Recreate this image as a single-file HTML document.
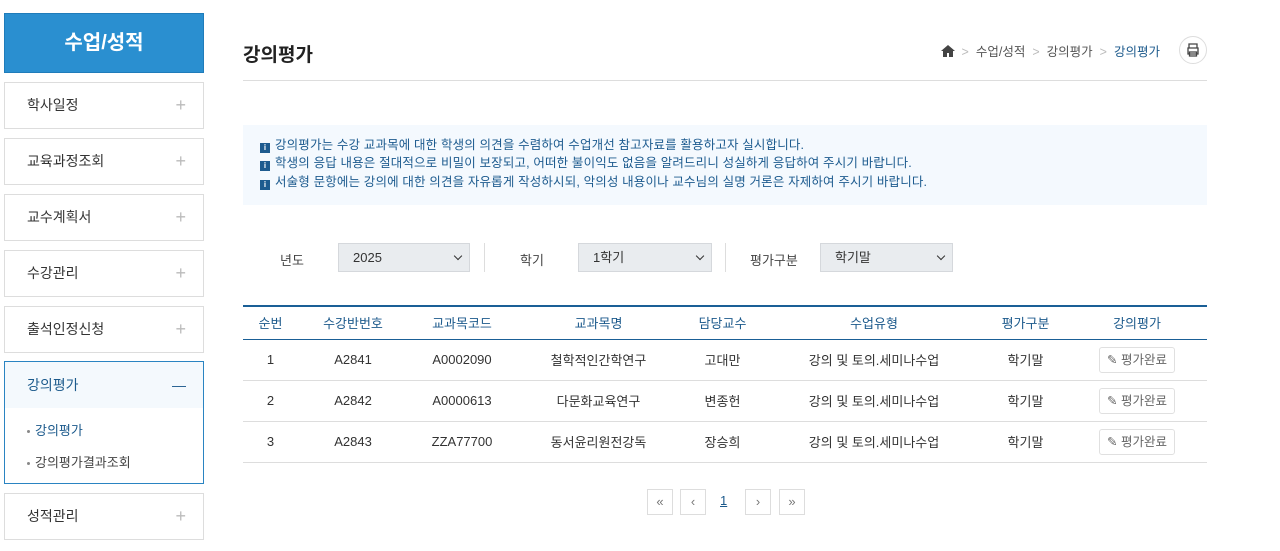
<!DOCTYPE html>
<html><head><meta charset="utf-8"><style>
*{box-sizing:border-box;margin:0;padding:0}
body{width:1280px;height:551px;background:#fff;font-family:"Liberation Sans","Noto Sans CJK KR",sans-serif;color:#333;position:relative;overflow:hidden;font-size:13px}
.abs{position:absolute}
.side-title{left:4px;top:13px;width:200px;height:60px;background:#2a8fd0;border:1px solid #1f7cba;color:#fff;font-size:20px;font-weight:bold;text-align:center;line-height:58px}
.mi{left:4px;width:200px;height:47px;border:1px solid #ddd;font-size:14px;line-height:45px;padding-left:22px;color:#333}
.mi .pl{position:absolute;right:17px;top:0;color:#bbb;font-size:18px;font-weight:300}
.act{left:4px;top:361px;width:200px;height:123px;border:1px solid #2a84c2}
.act .hd{height:46px;background:#f4f9fd;line-height:46px;padding-left:22px;font-size:14px;color:#1c5a8c;position:relative}
.act .hd span{position:absolute;right:17px;top:0;color:#1c5a8c;font-weight:300}
.sub{font-size:13px;padding-left:22px;height:32px;line-height:32px;color:#444}
.sub b{display:inline-block;width:3px;height:3px;background:#888;border-radius:50%;vertical-align:middle;margin-right:5px}
h1{left:243px;top:40px;font-size:19px;font-weight:bold;color:#222}
.bc{right:120px;top:41px;font-size:12.5px;color:#555}
.bc i{color:#bbb;font-style:normal;margin:0 7px}
.pr{left:1179px;top:36px;width:28px;height:28px;border:1px solid #ddd;border-radius:50%}
.hr{left:243px;top:80px;width:964px;height:1px;background:#ddd}
.info{left:243px;top:125px;width:964px;height:80px;background:#f4f9fe;padding:11px 0 0 17px;font-size:12.5px;color:#1d5b8f;line-height:18.3px;letter-spacing:0.15px}
.info b{display:inline-block;width:10px;height:10px;background:#1d5b8f;vertical-align:-1px;margin-right:5px;color:#fff;font-size:8px;line-height:10px;text-align:center}
.lab{top:250px;font-size:13px;color:#444}
.sel{top:243px;height:29px;background:#e9ecef;border:1px solid #d5d8dc;font-size:13px;line-height:27px;padding-left:14px;color:#333}
.sel:after{content:"";position:absolute;right:8px;top:9px;width:5px;height:5px;border-right:1.6px solid #333;border-bottom:1.6px solid #333;transform:rotate(45deg)}
.vl{top:243px;width:1px;height:29px;background:#ddd}
table{position:absolute;left:243px;top:305px;width:964px;border-collapse:collapse;border-top:2px solid #1a5f96;font-size:13px}
th{height:33px;font-weight:normal;color:#1c5a8c;border-bottom:1px solid #1a5f96}
td{height:41px;text-align:center;border-bottom:1px solid #ddd;color:#333}
.btn{display:inline-block;border:1px solid #e0e0e0;border-radius:3px;padding:0 7px;height:26px;line-height:24px;font-size:12.5px;color:#666}
.pg{top:489px;width:26px;height:26px;border:1px solid #ddd;text-align:center;line-height:23px;color:#777;font-size:13px}
</style></head><body>
<div class="abs side-title">수업/성적</div>
<div class="abs mi" style="top:82px">학사일정<span class="pl">+</span></div>
<div class="abs mi" style="top:138px">교육과정조회<span class="pl">+</span></div>
<div class="abs mi" style="top:194px">교수계획서<span class="pl">+</span></div>
<div class="abs mi" style="top:250px">수강관리<span class="pl">+</span></div>
<div class="abs mi" style="top:306px">출석인정신청<span class="pl">+</span></div>
<div class="abs act"><div class="hd">강의평가<span>—</span></div>
<div class="sub" style="margin-top:7px;color:#1c5a8c"><b></b>강의평가</div>
<div class="sub"><b></b>강의평가결과조회</div></div>
<div class="abs mi" style="top:493px">성적관리<span class="pl">+</span></div>

<h1 class="abs">강의평가</h1>
<div class="abs bc"><svg width="14" height="12" viewBox="0 0 14 12" style="vertical-align:-1px"><path d="M7 0L0 6h2v6h4V8h2v4h4V6h2z" fill="#444"/></svg><i>&gt;</i>수업/성적<i>&gt;</i>강의평가<i>&gt;</i><span style="color:#1c5a8c">강의평가</span></div>
<div class="abs pr"><svg width="26" height="26" viewBox="0 0 26 26"><path d="M9 11V7h8v4M8 11h10v6H8zM9.5 15h7v4h-7z" fill="none" stroke="#444" stroke-width="1.3"/></svg></div>
<div class="abs hr"></div>
<div class="abs info">
<div><b>i</b>강의평가는 수강 교과목에 대한 학생의 의견을 수렴하여 수업개선 참고자료를 활용하고자 실시합니다.</div>
<div><b>i</b>학생의 응답 내용은 절대적으로 비밀이 보장되고, 어떠한 불이익도 없음을 알려드리니 성실하게 응답하여 주시기 바랍니다.</div>
<div><b>i</b>서술형 문항에는 강의에 대한 의견을 자유롭게 작성하시되, 악의성 내용이나 교수님의 실명 거론은 자제하여 주시기 바랍니다.</div>
</div>
<div class="abs lab" style="left:280px">년도</div>
<div class="abs sel" style="left:338px;width:132px">2025</div>
<div class="abs vl" style="left:484px"></div>
<div class="abs lab" style="left:520px">학기</div>
<div class="abs sel" style="left:578px;width:134px">1학기</div>
<div class="abs vl" style="left:725px"></div>
<div class="abs lab" style="left:750px">평가구분</div>
<div class="abs sel" style="left:820px;width:133px">학기말</div>

<table>
<colgroup><col width="55"><col width="110"><col width="108"><col width="165"><col width="83"><col width="220"><col width="83"><col width="140"></colgroup>
<tr><th>순번</th><th>수강반번호</th><th>교과목코드</th><th>교과목명</th><th>담당교수</th><th>수업유형</th><th>평가구분</th><th>강의평가</th></tr>
<tr><td>1</td><td>A2841</td><td>A0002090</td><td>철학적인간학연구</td><td>고대만</td><td>강의 및 토의.세미나수업</td><td>학기말</td><td><span class="btn">✎ 평가완료</span></td></tr>
<tr><td>2</td><td>A2842</td><td>A0000613</td><td>다문화교육연구</td><td>변종헌</td><td>강의 및 토의.세미나수업</td><td>학기말</td><td><span class="btn">✎ 평가완료</span></td></tr>
<tr><td>3</td><td>A2843</td><td>ZZA77700</td><td>동서윤리원전강독</td><td>장승희</td><td>강의 및 토의.세미나수업</td><td>학기말</td><td><span class="btn">✎ 평가완료</span></td></tr>
</table>
<div class="abs pg" style="left:647px">«</div>
<div class="abs pg" style="left:680px">‹</div>
<div class="abs" style="left:720px;top:493px;font-size:13px;color:#1c5a8c;text-decoration:underline">1</div>
<div class="abs pg" style="left:745px">›</div>
<div class="abs pg" style="left:779px">»</div>
</body></html>
